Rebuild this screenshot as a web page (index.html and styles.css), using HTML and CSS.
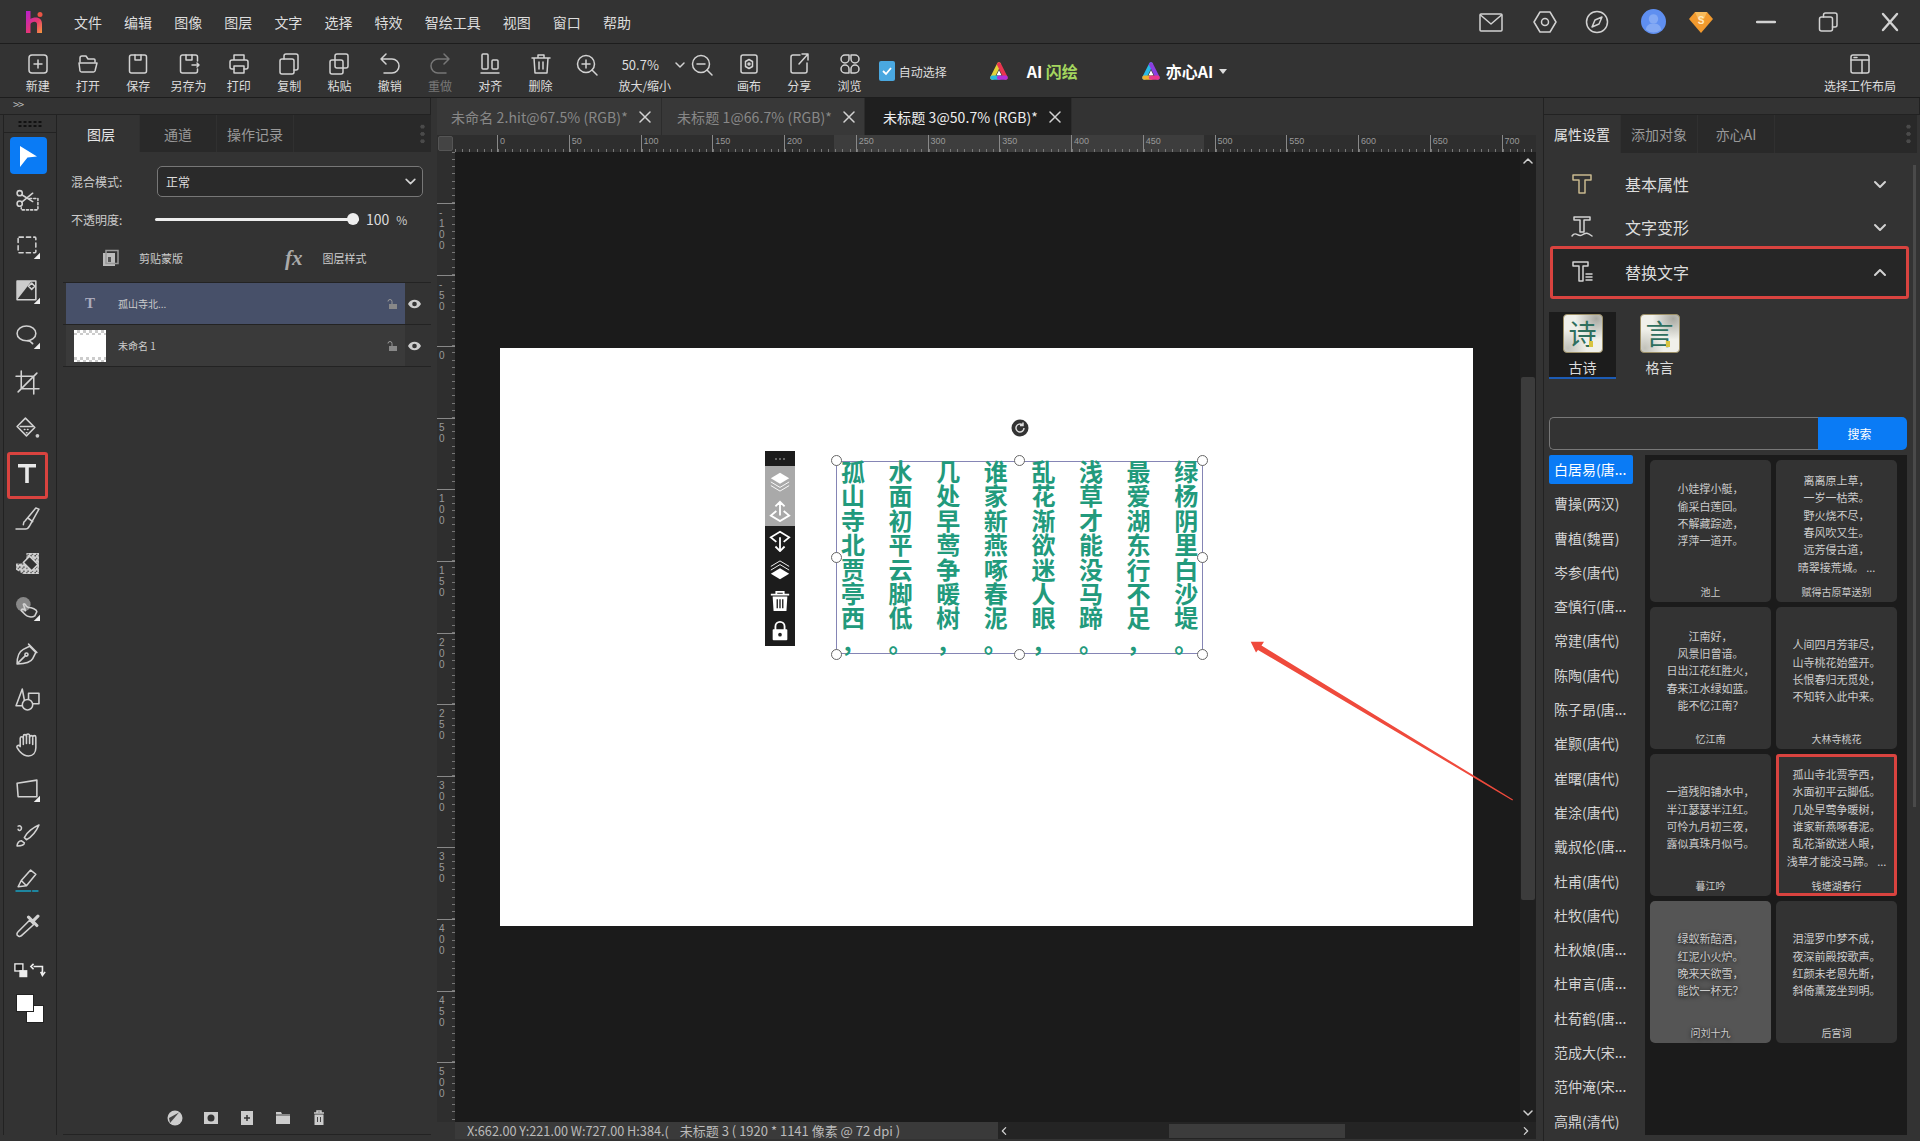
FILE: index.html
```html
<!DOCTYPE html>
<html lang="zh-CN">
<head>
    <meta charset="UTF-8">
    <title>Hitpaw</title>
    <link rel="stylesheet" href="styles.css">
</head>
<body>
    <header class="menubar">
        <svg class="logo" viewBox="0 0 24 24" width="24" height="24">
            <defs>
                <linearGradient id="logoGrad" x1="0" y1="0" x2="1" y2="1"><stop offset="0" stop-color="#b61fd0"/><stop offset="0.6" stop-color="#e8386f"/><stop offset="1" stop-color="#f59a3c"/></linearGradient>
            </defs>
            <path d="M3 1h4.500v8c1.500-1 3-1.500 5-1.500 4.500 0 6.500 2.500 6.500 6.500v9h-5v-8.500c0-1.800-.8-2.700-2.500-2.700-1.600 0-4 1-4 2.700v8.500H3z" fill="url(#logoGrad)"/>
            <circle cx="17" cy="4.500" r="2.500" fill="#ea5545"/>
        </svg>
        <nav class="menu">
            <span>文件</span><span>编辑</span><span>图像</span><span>图层</span><span>文字</span><span>选择</span><span>特效</span><span>智绘工具</span><span>视图</span><span>窗口</span><span>帮助</span>
        </nav>
        <div class="tray">
            <svg class="ico" viewBox="0 0 24 24" width="24" height="24"><rect x="1" y="4" width="22" height="17" rx="1"/><path d="M1.500 5l10.500 9 10.500-9"/></svg>
            <svg class="ico" viewBox="0 0 24 24" width="24" height="24"><path d="M7 2h10l6 10-6 10H7L1 12z"/><circle cx="12" cy="12" r="3.500"/></svg>
            <svg class="ico" viewBox="0 0 24 24" width="24" height="24"><circle cx="12" cy="12" r="10.500"/><path d="M17 7l-3 7-7 3 3-7z"/></svg>
            <svg viewBox="0 0 24 24" width="25" height="25"><circle cx="12" cy="12" r="12" fill="#5f8ff0"/><circle cx="12" cy="9.500" r="4.500" fill="#83a9f4"/><path d="M4.500 20c1-5 4-6 7.500-6s6.500 1 7.500 6a12 12 0 0 1-15 0z" fill="#83a9f4"/></svg>
            <svg viewBox="0 0 24 24" width="24" height="24"><path d="M6 2h12l6 7-12 14L0 9z" fill="#f29a2e"/><path d="M6 2h12l-3 7H9z" fill="#f7bb5c"/><text x="12" y="14" class="gem-text">S</text></svg>
        </div>
        <div class="winbtns">
            <svg class="ico wide" viewBox="0 0 20 20" width="20" height="20"><path d="M1 10h18"/></svg>
            <svg class="ico" viewBox="0 0 20 20" width="20" height="20"><rect x="1.500" y="5" width="13" height="14" rx="2"/><path d="M5.500 5V3a2 2 0 0 1 2-2H17a2 2 0 0 1 2 2v10a2 2 0 0 1-2 2h-2.500"/></svg>
            <svg class="ico wide" viewBox="0 0 20 20" width="20" height="20"><path d="M3 2l14 16M17 2L3 18"/></svg>
        </div>
    </header>

    <div class="toolbar">
        <div class="tbtn"><svg class="ico" viewBox="0 0 24 24"><rect x="3" y="3" width="18" height="18" rx="3"/><path d="M12 8v8M8 12h8"/></svg><span>新建</span></div>
        <div class="tbtn"><svg class="ico" viewBox="0 0 24 24"><path d="M4 10V6a2 2 0 0 1 2-2h4l2 3h6a1 1 0 0 1 1 1v2"/><path d="M3 11h18l-2 8a2 2 0 0 1-2 1H6a2 2 0 0 1-2-1z"/></svg><span>打开</span></div>
        <div class="tbtn"><svg class="ico" viewBox="0 0 24 24"><rect x="3.500" y="3" width="17" height="18" rx="2"/><path d="M9 3v5h6V3"/></svg><span>保存</span></div>
        <div class="tbtn"><svg class="ico" viewBox="0 0 24 24"><path d="M20.500 9V5a2 2 0 0 0-2-2h-13a2 2 0 0 0-2 2v14a2 2 0 0 0 2 2h13a2 2 0 0 0 2-2v-2"/><path d="M9 3v5h6V3M15 13h7M20 11l2 2-2 2"/></svg><span>另存为</span></div>
        <div class="tbtn"><svg class="ico" viewBox="0 0 24 24"><path d="M7 8V3h10v5M7 17H5a2 2 0 0 1-2-2v-5a2 2 0 0 1 2-2h14a2 2 0 0 1 2 2v5a2 2 0 0 1-2 2h-2"/><rect x="7" y="14" width="10" height="7"/></svg><span>打印</span></div>
        <div class="tbtn"><svg class="ico" viewBox="0 0 24 24"><rect x="3" y="7" width="14" height="15" rx="2"/><path d="M7 7V4a2 2 0 0 1 2-2h10a2 2 0 0 1 2 2v12a2 2 0 0 1-2 2h-2"/></svg><span>复制</span></div>
        <div class="tbtn"><svg class="ico" viewBox="0 0 24 24"><rect x="3" y="8" width="13" height="14" rx="2"/><rect x="8" y="2" width="13" height="14" rx="2"/></svg><span>粘贴</span></div>
        <div class="tbtn"><svg class="ico" viewBox="0 0 24 24"><path d="M8 2L3 7l5 5M3 7h11a6.500 6.500 0 0 1 0 14H6"/></svg><span>撤销</span></div>
        <div class="tbtn dim"><svg class="ico" viewBox="0 0 24 24"><path d="M16 2l5 5-5 5M21 7H10a6.500 6.500 0 0 0 0 14h8"/></svg><span>重做</span></div>
        <div class="tbtn"><svg class="ico" viewBox="0 0 24 24"><rect x="4" y="2" width="6" height="15" rx="1"/><rect x="14" y="8" width="6" height="9" rx="1"/><path d="M3 21h18"/></svg><span>对齐</span></div>
        <div class="tbtn"><svg class="ico" viewBox="0 0 24 24"><path d="M3 6h18M9 6V3h6v3M5 6l1 15h12l1-15M10 10v7M14 10v7"/></svg><span>删除</span></div>
        <div class="zoomgroup">
            <div class="zoomrow">
                <svg class="ico" viewBox="0 0 24 24" width="24" height="24"><circle cx="11" cy="11" r="8.500"/><path d="M11 7v8M7 11h8M17 17l5 5"/></svg>
                <span class="zoomval">50.7%</span>
                <svg class="ico chev" viewBox="0 0 12 12" width="12" height="12"><path d="M2 4l4 4 4-4"/></svg>
                <svg class="ico" viewBox="0 0 24 24" width="24" height="24"><circle cx="11" cy="11" r="8.500"/><path d="M7 11h8M17 17l5 5"/></svg>
            </div>
            <span class="zoomlabel">放大/缩小</span>
        </div>
        <div class="tbtn"><svg class="ico" viewBox="0 0 24 24"><rect x="4" y="3" width="16" height="18" rx="2"/><path d="M12 7.500l3.500 2v5l-3.500 2-3.500-2v-5z"/><circle cx="12" cy="12" r="1"/></svg><span>画布</span></div>
        <div class="tbtn"><svg class="ico" viewBox="0 0 24 24"><path d="M13 3H6a2 2 0 0 0-2 2v14a2 2 0 0 0 2 2h12a2 2 0 0 0 2-2v-8M21 2L12 12M15 2h6v6"/></svg><span>分享</span></div>
        <div class="tbtn"><svg class="ico" viewBox="0 0 24 24"><path d="M11 3v4a4 4 0 1 1-4-4zM13 7V3h4a4 4 0 1 1-4 4zM11 17v4H7a4 4 0 1 1 4-4zM13 17a4 4 0 1 1 4 4h-4z"/></svg><span>浏览</span></div>
        <label class="autosel"><span class="checkbox"><svg viewBox="0 0 16 16" width="16" height="16"><path d="M4 8l3 3 5-6" fill="none" stroke="#fff" stroke-width="1.800"/></svg></span>自动选择</label>
        <div class="aibtn flash">
            <svg viewBox="0 0 24 24" width="20" height="24"><g fill="none" stroke-width="5" stroke-linecap="round"><path d="M4 20L12 4" stroke="#e3d23a"/><path d="M12 4l8 16" stroke="#e8344f"/><path d="M4 20h8" stroke="#28b8e0"/><path d="M12 20h8" stroke="#b32fd8"/></g><path d="M12 11l3 6H9z" fill="#fff"/></svg>
            <span class="ai-name">AI <em>闪绘</em></span>
        </div>
        <div class="aibtn yixin">
            <svg viewBox="0 0 24 24" width="20" height="24"><g fill="none" stroke-width="5" stroke-linecap="round"><path d="M4 20L12 4" stroke="#27b9e6"/><path d="M12 4l8 16" stroke="#8a3fe0"/><path d="M4 20h8" stroke="#f0b030"/><path d="M12 20h8" stroke="#e8388c"/></g><path d="M12 11l3 6H9z" fill="#fff"/></svg>
            <span class="ai-name">亦心AI</span>
            <i class="caret"></i>
        </div>
        <div class="tbtn layoutbtn"><svg class="ico" viewBox="0 0 24 24"><rect x="3" y="3" width="18" height="18" rx="2"/><path d="M3 8h18M14 8v13M6 5.500h3"/></svg><span>选择工作布局</span></div>
    </div>

    <div class="main">
        <div class="leftdock">
            <div class="strip">&gt;&gt;</div>
            <div class="leftbody">
                <div class="tools">
                    <div class="grip"></div>
                    <div class="tool active"><svg viewBox="0 0 24 24" width="24" height="24"><path d="M5 2l17 10.500-9.500 1L5 23z" fill="#fff"/></svg></div>
                    <div class="tool"><svg class="ico" viewBox="0 0 24 24"><circle cx="4.500" cy="5" r="2.500"/><circle cx="4.500" cy="15" r="2.500"/><path d="M6.500 6.500L17 13M6.500 13.500L17 5"/><path d="M14 10h8v11H6v-2" stroke-dasharray="2 2"/></svg></div>
                    <div class="tool"><svg class="ico" viewBox="0 0 24 24"><rect x="3" y="3" width="17" height="15" rx="1" stroke-dasharray="4 3"/><path class="corner" d="M24 18v6h-6z"/></svg></div>
                    <div class="tool"><svg class="ico" viewBox="0 0 24 24"><rect x="2" y="2" width="18" height="18"/><path class="solid" d="M2 20V2h14z"/><path class="dark" d="M7 17l8-9"/><path d="M13 7l3-3 3 3-3 3z"/><path class="corner" d="M24 18v6h-6z"/></svg></div>
                    <div class="tool"><svg class="ico" viewBox="0 0 24 24"><ellipse cx="11" cy="9" rx="9" ry="7"/><path d="M12 16c3 0 4 2 5 3"/><path class="corner" d="M24 18v6h-6z"/></svg></div>
                    <div class="tool"><svg class="ico" viewBox="0 0 24 24"><path d="M6 1v17h17M1 6h17v17M3 21L21 3"/></svg></div>
                    <div class="tool"><svg class="ico" viewBox="0 0 24 24"><path d="M10 3l9 9-8 8-9-9z"/><path d="M5 11h12"/><circle class="solid" cx="21.500" cy="20" r="1.800"/><path d="M9 14h.5M12 14h.5M11 17h.5"/></svg></div>
                    <div class="tool flagged"><svg viewBox="0 0 24 24" width="24" height="24"><path d="M3 3h18v3.500h-7.200V22h-3.600V6.500H3z" fill="#e8e8e8"/></svg></div>
                    <div class="tool"><svg class="ico" viewBox="0 0 24 24"><path d="M1 22h9c2 0 3-1 4-3l9-16-3-1-10 12c-2 1-2 3-2 4M13 12l4 3"/></svg></div>
                    <div class="tool"><svg class="ico" viewBox="0 0 24 24"><defs><pattern id="chk" width="4" height="4" patternUnits="userSpaceOnUse"><rect width="2" height="2" fill="#aaa"/><rect x="2" y="2" width="2" height="2" fill="#aaa"/></pattern></defs><path d="M1 12h10V2h12v20H8l-7-4z" fill="url(#chk)" stroke="none"/><path d="M14 5l8 8-6 6-8-8z" class="erase"/></svg></div>
                    <div class="tool"><svg class="ico" viewBox="0 0 24 24"><circle class="gray" cx="8" cy="8" r="7"/><path d="M8 8c1-1 2 0 3 2l2 1c3 0 8 2 8 4l-2 4c-3 2-7 1-9-1l-4-4c0-1 1-2 3-1l1 1z"/><path class="corner" d="M24 18v6h-6z"/></svg></div>
                    <div class="tool"><svg class="ico" viewBox="0 0 24 24"><path d="M2 22c0-6 2-12 6-14l6-3 6 6-3 6c-2 4-9 5-15 5zM2 22l8-8M13 3l8 8"/><circle cx="11" cy="13" r="1.500"/></svg></div>
                    <div class="tool"><svg class="ico" viewBox="0 0 24 24"><path d="M7 2L1 18h9z"/><rect x="13" y="6" width="10" height="10"/><circle cx="12" cy="17" r="5" class="bgfill"/></svg></div>
                    <div class="tool"><svg class="ico" viewBox="0 0 24 24"><path d="M5 13V6a1.500 1.500 0 0 1 3 0V4a1.500 1.500 0 0 1 3 0v-.500a1.500 1.500 0 0 1 3 0V5a1.500 1.500 0 0 1 3 0 1.500 1.500 0 0 1 3 0v10c0 5-3 8-7 8-5 0-7-3-9-5l-2-3c-1-2 2-3 3-1z"/><path d="M8 6v6M11 4v7M14 4v7M17 6v6"/></svg></div>
                    <div class="tool"><svg class="ico" viewBox="0 0 24 24"><path d="M2 6l19-3v16H3z"/><path class="corner" d="M24 18v6h-6z"/></svg></div>
                    <div class="tool"><svg class="ico" viewBox="0 0 24 24"><path d="M23 2c-5 2-12 7-14 12l2 2c5-2 10-9 12-14zM3 3c2-1 4 1 3 3s-3 1-3 0M2 22c0-3 2-5 4-5l3 2c0 2-2 3-7 3z"/></svg></div>
                    <div class="tool"><svg class="ico" viewBox="0 0 24 24"><path d="M3 18l3-6 9-10 5 4-9 11zM6 12l5 5"/><path class="cyan" d="M1 22h14M17 22h5"/></svg></div>
                    <div class="tool"><svg class="ico" viewBox="0 0 24 24"><path d="M3 22c-2-1-1-3 0-4L14 7l4 4L7 21c-1 1-3 2-4 1z"/><path class="thick" d="M13 4l8 8M17 8l5-5"/></svg></div>
                    <div class="tool swap"><svg viewBox="0 0 36 18" width="32" height="16"><rect x="1" y="1" width="9" height="8" fill="#222" stroke="#eee" stroke-width="1.500"/><rect x="6" y="8" width="9" height="8" fill="#eee"/><path d="M22 4h10v8M30 10l2 4 3-4M22 1l-3 3 3 3" fill="none" stroke="#eee" stroke-width="1.800"/></svg></div>
                    <div class="colors"><i class="bgcolor"></i><i class="fgcolor"></i></div>
                </div>
                <section class="panel">
                    <div class="tabs">
                        <span class="tab on">图层</span><span class="tab">通道</span><span class="tab">操作记录</span>
                        <i class="dots"></i>
                    </div>
                    <div class="field blend">
                        <span class="field-label">混合模式:</span>
                        <div class="select">正常<svg class="ico" viewBox="0 0 12 12" width="13" height="13"><path d="M2 4l4 4 4-4"/></svg></div>
                    </div>
                    <div class="field opacity">
                        <span class="field-label">不透明度:</span>
                        <div class="slider"><i></i></div>
                        <span class="opacity-num">100</span><span class="opacity-unit">%</span>
                    </div>
                    <div class="layeracts">
                        <svg viewBox="0 0 18 18" width="18" height="18"><rect x="1" y="4" width="12" height="13" fill="#bbb"/><rect x="4" y="1.500" width="12" height="13" fill="none" stroke="#999" stroke-width="1.500"/><path d="M6 8h3v5H6z" fill="#555"/></svg>
                        <span class="act-one">剪贴蒙版</span>
                        <span class="fx">fx</span>
                        <span class="act-two">图层样式</span>
                    </div>
                    <div class="layer selected">
                        <div class="layer-main"><span class="layer-t">T</span><span>孤山寺北...</span>
                            <svg class="lock" viewBox="0 0 12 12" width="12" height="12"><path d="M2 3.500a2 2 0 0 1 4 0V6" fill="none" stroke="#999"/><rect x="3" y="6" width="8" height="5" fill="#888"/></svg>
                        </div>
                        <svg class="eye" viewBox="0 0 14 10" width="13" height="10"><path d="M0 5c3-6 11-6 14 0-3 6-11 6-14 0z" fill="#ccc"/><circle cx="7" cy="5" r="2.500" fill="#333"/></svg>
                    </div>
                    <div class="layer">
                        <div class="layer-main"><span class="thumb"></span><span>未命名 1</span>
                            <svg class="lock" viewBox="0 0 12 12" width="12" height="12"><path d="M2 3.500a2 2 0 0 1 4 0V6" fill="none" stroke="#999"/><rect x="3" y="6" width="8" height="5" fill="#888"/></svg>
                        </div>
                        <svg class="eye" viewBox="0 0 14 10" width="13" height="10"><path d="M0 5c3-6 11-6 14 0-3 6-11 6-14 0z" fill="#ccc"/><circle cx="7" cy="5" r="2.500" fill="#333"/></svg>
                    </div>
                    <div class="panelfoot">
                        <svg viewBox="0 0 16 16" width="16" height="16"><circle cx="8" cy="8" r="7.500" fill="#ccc"/><path d="M12 2.500L3 13 2 8z" fill="#444"/></svg>
                        <svg viewBox="0 0 16 16" width="16" height="16"><rect x="1" y="2" width="14" height="12" fill="#ccc"/><circle cx="8" cy="8" r="3.500" fill="#333"/></svg>
                        <svg viewBox="0 0 16 16" width="16" height="16"><rect x="2" y="1" width="12" height="14" fill="#ccc"/><path d="M8 5v6M5 8h6" stroke="#333" stroke-width="1.500"/></svg>
                        <svg viewBox="0 0 16 16" width="16" height="16"><path d="M1 2h5l1 2h8v10H1z" fill="#ccc"/><path d="M1 5h14" stroke="#444"/></svg>
                        <svg viewBox="0 0 16 16" width="16" height="16"><path d="M3 3h10M6 3V1h4v2" stroke="#ccc" fill="none" stroke-width="1.500"/><path d="M3.500 4.500h9V15h-9z" fill="#ccc"/><path d="M6.500 7v5M9.500 7v5" stroke="#444"/></svg>
                    </div>
                </section>
            </div>
        </div>

        <div class="center">
            <div class="doctabs">
                <div class="doctab first"><span>未命名 2.hit@67.5% (RGB)*</span><svg class="ico" viewBox="0 0 12 12" width="12" height="12"><path d="M1 1l10 10M11 1L1 11"/></svg></div>
                <div class="doctab second"><span>未标题 1@66.7% (RGB)*</span><svg class="ico" viewBox="0 0 12 12" width="12" height="12"><path d="M1 1l10 10M11 1L1 11"/></svg></div>
                <div class="doctab current"><span>未标题 3@50.7% (RGB)*</span><svg class="ico" viewBox="0 0 12 12" width="12" height="12"><path d="M1 1l10 10M11 1L1 11"/></svg></div>
            </div>
            <div class="hruler">
                <i class="ruler-corner"></i>
                <i class="hruler-sel"></i>
                <div class="hmarks">
                    <span>0</span><span>50</span><span>100</span><span>150</span><span>200</span><span>250</span><span>300</span><span>350</span><span>400</span><span>450</span><span>500</span><span>550</span><span>600</span><span>650</span><span>700</span>
                </div>
            </div>
            <div class="workspace">
                <div class="vruler">
                    <span>-100</span><span>-50</span><span>0</span><span>50</span><span>100</span><span>150</span><span>200</span><span>250</span><span>300</span><span>350</span><span>400</span><span>450</span><span>500</span>
                </div>
                <div class="viewport">
                    <div class="artboard">
                        <div class="floatbar">
                            <div class="fb-grip"></div>
                            <div class="fb-btn off"><svg viewBox="0 0 24 24"><path d="M12 3l10 6-10 6-10-6z" fill="#fff"/><path d="M2 13l10 6 10-6M2 17l10 6 10-6" fill="none" stroke="#fff" stroke-width="1"/></svg></div>
                            <div class="fb-btn off"><svg viewBox="0 0 24 24"><path d="M12 2v15M7 7l5-5 5 5M8 12l-6 5 10 6 10-6-6-5" fill="none" stroke="#fff" stroke-width="2"/></svg></div>
                            <div class="fb-btn"><svg viewBox="0 0 24 24"><path d="M12 8v15M7 18l5 5 5-5M8 13L2 8l10-6 10 6-6 5" fill="none" stroke="#fff" stroke-width="2"/></svg></div>
                            <div class="fb-btn"><svg viewBox="0 0 24 24"><path d="M2 7l10-6 10 6M2 11l10-6 10 6" fill="none" stroke="#fff" stroke-width="1"/><path d="M12 9l10 6-10 6-10-6z" fill="#fff"/></svg></div>
                            <div class="fb-btn"><svg viewBox="0 0 24 24"><path d="M2 5h20M8 5V2h8v3" fill="none" stroke="#fff" stroke-width="2"/><path d="M4 7h16l-1 16H5z" fill="#fff"/><path d="M9 10v10M12 10v10M15 10v10" stroke="#222" stroke-width="1.500"/></svg></div>
                            <div class="fb-btn"><svg viewBox="0 0 24 24"><path d="M7 11V7a5 5 0 0 1 10 0v4" fill="none" stroke="#fff" stroke-width="2"/><rect x="4" y="10" width="16" height="12" rx="1" fill="#fff"/><circle cx="12" cy="16" r="2" fill="#222"/></svg></div>
                        </div>
                        <svg class="rotator" viewBox="0 0 18 18" width="18" height="18"><circle cx="9" cy="9" r="8.500" fill="#333"/><path d="M13 9a4 4 0 1 1-1.500-3.100M12 3.500v3h-3" fill="none" stroke="#ddd" stroke-width="1.500"/></svg>
                        <div class="textframe">
                            <div class="verse">
                                <div>孤山寺北贾亭西，</div><div>水面初平云脚低。</div><div>几处早莺争暖树，</div><div>谁家新燕啄春泥。</div><div>乱花渐欲迷人眼，</div><div>浅草才能没马蹄。</div><div>最爱湖东行不足，</div><div>绿杨阴里白沙堤。</div>
                            </div>
                            <i class="handle tl"></i><i class="handle tc"></i><i class="handle tr"></i>
                            <i class="handle ml"></i><i class="handle mr"></i>
                            <i class="handle bl"></i><i class="handle bc"></i><i class="handle br"></i>
                        </div>
                    </div>
                </div>
                <div class="vscroll">
                    <svg class="ico" viewBox="0 0 12 12" width="12" height="12"><path d="M2 8l4-4 4 4"/></svg>
                    <i class="vthumb"></i>
                    <svg class="ico endarrow" viewBox="0 0 12 12" width="12" height="12"><path d="M2 4l4 4 4-4"/></svg>
                </div>
            </div>
            <div class="statusrow">
                <i class="status-corner"></i>
                <div class="status"><span class="status-pos">X:662.00 Y:221.00 W:727.00 H:384.(</span><span>未标题 3 ( 1920 * 1141 像素 @ 72 dpi )</span></div>
                <div class="hscroll">
                    <svg class="ico" viewBox="0 0 12 12" width="10" height="10"><path d="M8 2L4 6l4 4"/></svg>
                    <i class="hthumb"></i>
                    <svg class="ico endarrow" viewBox="0 0 12 12" width="10" height="10"><path d="M4 2l4 4-4 4"/></svg>
                </div>
            </div>
        </div>

        <aside class="rightdock">
            <div class="strip"></div>
            <div class="tabs right">
                <span class="tab on">属性设置</span><span class="tab">添加对象</span><span class="tab">亦心AI</span>
                <i class="dots"></i>
            </div>
            <div class="sections">
                <div class="section">
                    <svg class="ico sec-ico" viewBox="0 0 24 24" width="24" height="24"><path d="M3 3h18v5h-6v13H9V8H3z" stroke="#c9b98f"/></svg>
                    <span>基本属性</span>
                    <svg class="ico sec-chev" viewBox="0 0 14 14" width="14" height="14"><path d="M2 5l5 5 5-5"/></svg>
                </div>
                <div class="section">
                    <svg class="ico sec-ico" viewBox="0 0 24 24" width="24" height="24"><path d="M4 2h16v3h-6v12h-4V5H4zM2 21c4-6 6 2 10-1s6-2 10 1"/></svg>
                    <span>文字变形</span>
                    <svg class="ico sec-chev" viewBox="0 0 14 14" width="14" height="14"><path d="M2 5l5 5 5-5"/></svg>
                </div>
                <div class="section open">
                    <svg class="ico sec-ico" viewBox="0 0 24 24" width="24" height="24"><path d="M3 2h15v4h-5v15h-4V6H3zM16 14h6M16 17h6M16 20h6"/></svg>
                    <span>替换文字</span>
                    <svg class="ico sec-chev" viewBox="0 0 14 14" width="14" height="14"><path d="M2 10l5-5 5 5"/></svg>
                </div>
            </div>
            <div class="kinds">
                <div class="kind on"><span class="kind-tile">诗</span><span>古诗</span></div>
                <div class="kind"><span class="kind-tile">言</span><span>格言</span></div>
            </div>
            <div class="search"><input class="search-input" type="text"><button class="search-btn">搜索</button></div>
            <div class="library">
                <ul class="authors">
                    <li class="on">白居易(唐...</li><li>曹操(两汉)</li><li>曹植(魏晋)</li><li>岑参(唐代)</li><li>查慎行(唐...</li><li>常建(唐代)</li><li>陈陶(唐代)</li><li>陈子昂(唐...</li><li>崔颢(唐代)</li><li>崔曙(唐代)</li><li>崔涂(唐代)</li><li>戴叔伦(唐...</li><li>杜甫(唐代)</li><li>杜牧(唐代)</li><li>杜秋娘(唐...</li><li>杜审言(唐...</li><li>杜荀鹤(唐...</li><li>范成大(宋...</li><li>范仲淹(宋...</li><li>高鼎(清代)</li>
                </ul>
                <div class="poems">
                    <div class="poem raised"><p>小娃撑小艇，<br>偷采白莲回。<br>不解藏踪迹，<br>浮萍一道开。</p><h4>池上</h4></div>
                    <div class="poem"><p>离离原上草，<br>一岁一枯荣。<br>野火烧不尽，<br>春风吹又生。<br>远芳侵古道，<br>晴翠接荒城。 ...</p><h4>赋得古原草送别</h4></div>
                    <div class="poem"><p>江南好，<br>风景旧曾谙。<br>日出江花红胜火，<br>春来江水绿如蓝。<br>能不忆江南？</p><h4>忆江南</h4></div>
                    <div class="poem"><p>人间四月芳菲尽，<br>山寺桃花始盛开。<br>长恨春归无觅处，<br>不知转入此中来。</p><h4>大林寺桃花</h4></div>
                    <div class="poem"><p>一道残阳铺水中，<br>半江瑟瑟半江红。<br>可怜九月初三夜，<br>露似真珠月似弓。</p><h4>暮江吟</h4></div>
                    <div class="poem picked"><p>孤山寺北贾亭西，<br>水面初平云脚低。<br>几处早莺争暖树，<br>谁家新燕啄春泥。<br>乱花渐欲迷人眼，<br>浅草才能没马蹄。 ...</p><h4>钱塘湖春行</h4></div>
                    <div class="poem hover"><p>绿蚁新醅酒，<br>红泥小火炉。<br>晚来天欲雪，<br>能饮一杯无？</p><h4>问刘十九</h4></div>
                    <div class="poem"><p>泪湿罗巾梦不成，<br>夜深前殿按歌声。<br>红颜未老恩先断，<br>斜倚薰笼坐到明。</p><h4>后宫词</h4></div>
                </div>
            </div>
            <i class="sidescroll"></i>
        </aside>
    </div>

    <svg class="callout" viewBox="0 0 1920 1141" width="1920" height="1141"><polygon points="1250.700,641.700 1264,641.700 1261.500,645.500 1513,799.500 1512.400,800.500 1258,650 1256,652.500" fill="#ef4a3c"/></svg>
</body>
</html>
```

FILE: styles.css
```css
*, *::before, *::after {
    box-sizing: border-box;
}
body {
    margin: 0;
    width: 1920px;
    height: 1141px;
    overflow: hidden;
    position: relative;
    background: #333;
    color: #ddd;
    font-family: "Noto Sans CJK SC", "Liberation Sans", sans-serif;
    font-size: 12px;
    display: flex;
    flex-direction: column;
}
i, em {
    font-style: normal;
}
.ico {
    fill: none;
    stroke: #d2d2d2;
    stroke-width: 1.5;
    stroke-linecap: round;
    stroke-linejoin: round;
    flex: none;
}
.ico .corner { fill: #eee; stroke: none; }
.ico .solid { fill: #ccc; stroke: none; }
.ico .dark { stroke: #333; }
.ico .gray { fill: #888; stroke: none; }
.ico .cyan { stroke: #19a3c4; }
.ico .thick { stroke-width: 3; }
.ico .bgfill { fill: #333; }
.ico .erase { fill: #333; }

/* top menu */
.menubar {
    height: 44px;
    flex: none;
    display: flex;
    align-items: center;
    border-bottom: 1px solid #1d1d1d;
    padding-left: 23px;
}
.menu {
    display: flex;
    gap: 22.100px;
    margin-left: 27px;
    font-size: 14px;
    line-height: 20px;
}
.tray {
    margin-left: auto;
    display: flex;
    align-items: center;
}
.tray svg:nth-child(2) { margin-left: 30px; }
.tray svg:nth-child(3) { margin-left: 28px; }
.tray svg:nth-child(4) { margin-left: 32px; }
.tray svg:nth-child(5) { margin-left: 23px; }
.gem-text {
    font-family: "Liberation Sans", sans-serif;
    font-size: 10px;
    font-weight: bold;
    fill: #ffe9c0;
    text-anchor: middle;
}
.winbtns {
    display: flex;
    gap: 42px;
    margin-left: 43px;
    padding-right: 20px;
}
.winbtns .wide { stroke-width: 2.4; }

/* toolbar */
.toolbar {
    height: 54px;
    flex: none;
    display: flex;
    padding-left: 12.500px;
    border-bottom: 1px solid #1d1d1d;
}
.tbtn {
    width: 50.300px;
    flex: none;
    display: flex;
    flex-direction: column;
    align-items: center;
    padding-top: 8px;
    color: #ddd;
    line-height: 17px;
}
.tbtn svg {
    width: 24px;
    height: 24px;
    margin-bottom: 1px;
}
.tbtn.dim {
    color: #777;
}
.tbtn.dim .ico {
    stroke: #777;
}
.zoomgroup {
    width: 158px;
    flex: none;
    display: flex;
    flex-direction: column;
    align-items: center;
    padding-top: 8px;
    line-height: 17px;
}
.zoomrow {
    display: flex;
    align-items: center;
    height: 25px;
}
.zoomval {
    width: 58px;
    margin-left: 12px;
    text-align: center;
    font-size: 13px;
}
.zoomrow .chev {
    margin: 0 4px 0 5px;
}
.autosel {
    display: flex;
    align-items: center;
    margin-left: 4px;
    gap: 4px;
    height: 54px;
    flex: none;
}
.checkbox {
    width: 16px;
    height: 20px;
    background: #4aa8e0;
    border-radius: 2px;
    display: flex;
    align-items: center;
}
.aibtn {
    display: flex;
    align-items: center;
    height: 54px;
    color: #fff;
    font-weight: bold;
    flex: none;
}
.flash {
    margin-left: 42px;
    gap: 18px;
}
.flash em {
    color: #a4d65e;
}
.ai-name {
    font-size: 16px;
    white-space: nowrap;
}
.yixin {
    margin-left: 63px;
    gap: 5px;
}
.caret {
    width: 0;
    height: 0;
    border: 4px solid transparent;
    border-top: 5px solid #ddd;
    border-bottom: 0;
    margin-left: 1px;
}
.layoutbtn {
    margin-left: auto;
    margin-right: 24px;
    width: 72px;
    white-space: nowrap;
}

/* layout */
.main {
    flex: 1;
    display: flex;
    min-height: 0;
}
.leftdock {
    width: 437px;
    flex: none;
    display: flex;
    flex-direction: column;
}
.strip {
    height: 17px;
    flex: none;
    border-bottom: 1px solid #222;
    border-right: 1px solid #222;
    margin-right: 6px;
    padding-left: 13px;
    font-size: 11px;
    letter-spacing: -1px;
    line-height: 13px;
    color: #bbb;
}
.leftbody {
    flex: 1;
    display: flex;
    min-height: 0;
    padding: 0 6px 6px 3px;
    gap: 6px;
}

/* tools */
.tools {
    width: 54px;
    flex: none;
    border-left: 1px solid #222;
    border-right: 1px solid #222;
}
.grip {
    height: 18px;
    border-bottom: 1px solid #222;
    background: radial-gradient(circle, #111 1.200px, transparent 1.300px) center 5px / 5px 4px repeat-x, radial-gradient(circle, #111 1.200px, transparent 1.300px) center 9px / 5px 4px repeat-x;
    background-clip: content-box;
    padding: 0 13px;
}
.tool {
    height: 45.300px;
    display: flex;
    align-items: center;
    justify-content: center;
    position: relative;
    padding-right: 6px;
}
.tool svg.ico {
    width: 25px;
    height: 25px;
}
.tool.active::before {
    content: "";
    position: absolute;
    left: 6px;
    top: 4px;
    width: 37px;
    height: 37px;
    background: #0a7bf5;
    border-radius: 4px;
}
.tool.active svg {
    position: relative;
}
.tool.flagged::after {
    content: "";
    position: absolute;
    left: 3px;
    top: 2px;
    width: 41px;
    height: 47px;
    border: 3px solid #d9433f;
    border-radius: 3px;
}
.tool.swap {
    padding-right: 0;
}
.colors {
    position: relative;
    height: 30px;
}
.colors i {
    position: absolute;
    display: block;
    width: 18px;
    height: 18px;
    background: #fff;
}
.colors .bgcolor {
    left: 22px;
    top: 11px;
    border: 1px solid #222;
}
.colors .fgcolor {
    left: 12px;
    top: 0;
    border: 1px solid #222;
}

/* panel shared */
.panel {
    flex: 1;
    display: flex;
    flex-direction: column;
    min-width: 0;
}
.tabs {
    height: 37px;
    flex: none;
    display: flex;
    background: #292929;
    position: relative;
    font-size: 14px;
    color: #999;
}
.tab {
    width: 77px;
    display: flex;
    align-items: center;
    justify-content: center;
    border-right: 1px solid #303030;
    white-space: nowrap;
}
.tab.on {
    background: #333;
    color: #e6e6e6;
}
.dots {
    position: absolute;
    right: 4px;
    top: 8px;
    width: 9px;
    height: 22px;
    background: radial-gradient(circle, #4a4a4a 2px, transparent 2.200px) 0 0 / 9px 7.300px;
}

/* layer panel */
.field {
    display: flex;
    align-items: center;
    padding-left: 8px;
}
.field-label {
    width: 86px;
    color: #ccc;
}
.blend {
    margin-top: 14px;
    height: 31px;
}
.select {
    width: 266px;
    height: 31px;
    background: #2a2a2a;
    border: 1px solid #777;
    border-radius: 5px;
    display: flex;
    align-items: center;
    justify-content: space-between;
    padding: 0 5px 0 8px;
    font-size: 12px;
}
.opacity {
    margin-top: 7px;
    height: 30px;
}
.slider {
    width: 204px;
    height: 3px;
    margin-left: -2px;
    background: #eee;
    border-radius: 2px;
    position: relative;
}
.slider i {
    position: absolute;
    right: 0;
    top: -5px;
    width: 12px;
    height: 12px;
    border-radius: 50%;
    background: #eee;
}
.opacity-num {
    font-size: 14px;
    margin-left: 7px;
    color: #ddd;
}
.opacity-unit {
    margin-left: 7px;
    color: #ccc;
}
.layeracts {
    height: 49px;
    display: flex;
    align-items: center;
    font-size: 11px;
    color: #ccc;
    padding-left: 39px;
    padding-bottom: 1px;
    border-bottom: 1px solid #232323;
}
.act-one {
    margin-left: 19px;
}
.fx {
    margin-left: 102px;
    font-family: "Liberation Serif", serif;
    font-style: italic;
    font-weight: bold;
    font-size: 21px;
    color: #aaa;
    line-height: 24px;
}
.act-two {
    margin-left: 20px;
}
.layer {
    height: 42px;
    display: flex;
    align-items: center;
    border-bottom: 1px solid #232323;
    font-size: 10px;
    color: #ccc;
}
.layer-main {
    width: 339px;
    margin-left: 3px;
    height: 100%;
    display: flex;
    align-items: center;
    background: #3a3a3a;
    padding-left: 8px;
    position: relative;
}
.layer.selected .layer-main {
    background: #475069;
}
.layer-t {
    width: 32px;
    margin-right: 12px;
    text-align: center;
    font-family: "Liberation Serif", serif;
    font-weight: bold;
    font-size: 15px;
    color: #aab;
}
.thumb {
    width: 32px;
    height: 32px;
    margin-right: 12px;
    background: linear-gradient(#fff, #fff) center / 32px 22px no-repeat, repeating-conic-gradient(#ccc 0 25%, #fff 0 50%) 0 0 / 6px 6px;
}
.lock {
    margin-left: auto;
    margin-right: 7px;
}
.eye {
    margin-left: 3px;
}
.panelfoot {
    margin-top: auto;
    display: flex;
    gap: 20px;
    padding: 0 0 8px 104px;
    height: 26px;
    align-items: center;
    border-bottom: 1px solid #232323;
}

/* center */
.center {
    width: 1099px;
    flex: none;
    display: flex;
    flex-direction: column;
    margin-right: 7px;
}
.doctabs {
    height: 37px;
    flex: none;
    display: flex;
    background: #333;
    font-size: 14px;
    letter-spacing: .1px;
    color: #888;
}
.doctab {
    display: flex;
    align-items: center;
    gap: 11px;
    white-space: nowrap;
    background: #383838;
    border-right: 1px solid #2c2c2c;
}
.doctab.first { width: 225px; padding-left: 14px; }
.doctab.second { width: 203px; padding-left: 15px; gap: 11px; }
.doctab.current {
    width: 207px;
    padding-left: 18px;
    background: #1f1f1f;
    color: #eee;
}
.hruler {
    height: 17px;
    flex: none;
    position: relative;
    display: flex;
    background: #2e2e2e;
}
.hruler::after {
    content: "";
    position: absolute;
    left: 18px;
    right: 0;
    bottom: 0;
    height: 3px;
    background: repeating-linear-gradient(90deg, #777 0 1px, transparent 1px 7.175px);
}
.ruler-corner {
    width: 15px;
    height: 15px;
    margin: 1px 0 0 1px;
    background: #444;
    border: 1px solid #555;
    border-radius: 2px;
}
.hmarks {
    position: absolute;
    left: 60px;
    top: 0;
    display: flex;
    z-index: 1;
}
.hmarks span {
    width: 71.750px;
    height: 17px;
    border-left: 1px solid #888;
    padding-left: 2px;
    font-size: 9px;
    line-height: 13px;
    color: #999;
    font-family: "Liberation Sans", sans-serif;
}
.hruler-sel {
    position: absolute;
    left: 397px;
    width: 370px;
    top: 0;
    bottom: 0;
    background: #3d3d3d;
}
.workspace {
    flex: 1;
    display: flex;
    min-height: 0;
}
.vruler {
    width: 18px;
    flex: none;
    background: #2e2e2e;
    background-image: repeating-linear-gradient(180deg, #777 0 1px, transparent 1px 7.160px);
    background-size: 3px 100%;
    background-position: right 0;
    background-repeat: no-repeat;
    padding-top: 51px;
    overflow: hidden;
}
.vruler span {
    display: block;
    height: 71.600px;
    width: 100%;
    border-top: 1px solid #888;
    padding: 3px 9px 0 2px;
    font-size: 10px;
    line-height: 11px;
    color: #999;
    word-break: break-all;
    font-family: "Liberation Sans", sans-serif;
}
.viewport {
    flex: 1;
    background: #1b1b1b;
    padding: 196px 0 0 45px;
    min-width: 0;
}
.artboard {
    width: 973px;
    height: 578px;
    background: #fff;
    position: relative;
}
.floatbar {
    position: absolute;
    left: 265px;
    top: 103px;
    width: 30px;
    height: 195px;
    background: #1c1c1c;
}
.fb-grip {
    height: 15px;
    padding: 0 9px;
    background: radial-gradient(circle, #666 1px, transparent 1.200px) center center / 4px 4px repeat-x;
    background-clip: content-box;
}
.fb-btn {
    height: 30px;
    display: flex;
    align-items: center;
    justify-content: center;
}
.fb-btn.off {
    background: #a9a9a9;
}
.fb-btn svg {
    width: 22px;
    height: 22px;
}
.rotator {
    position: absolute;
    left: 511px;
    top: 71px;
}
.textframe {
    position: absolute;
    left: 336px;
    top: 113px;
    width: 367px;
    height: 193px;
    border: 1px solid #8585b5;
}
.verse {
    display: flex;
    gap: 23.600px;
    margin-top: -3px;
    padding-left: 4px;
    font-size: 24px;
    line-height: 24.400px;
    font-weight: bold;
    color: #229a7c;
}
.verse div {
    width: 24px;
    word-break: break-all;
    line-break: anywhere;
}
.handle {
    position: absolute;
    width: 11px;
    height: 11px;
    border-radius: 50%;
    background: #fff;
    border: 1px solid #666;
}
.handle.tl, .handle.tc, .handle.tr { top: -7px; }
.handle.ml, .handle.mr { top: 90px; }
.handle.bl, .handle.bc, .handle.br { bottom: -7px; }
.handle.tl, .handle.ml, .handle.bl { left: -6px; }
.handle.tc, .handle.bc { left: 177px; }
.handle.tr, .handle.mr, .handle.br { right: -6px; }
.vscroll {
    width: 16px;
    flex: none;
    background: #1f1f1f;
    display: flex;
    flex-direction: column;
    align-items: center;
    padding: 3px 0;
}
.vthumb {
    width: 14px;
    height: 523px;
    margin-top: 210px;
    background: #3c3c3c;
    border-radius: 2px;
}
.vscroll .endarrow {
    margin-top: auto;
}
.statusrow {
    height: 17px;
    flex: none;
    margin-bottom: 2px;
    display: flex;
}
.status-corner {
    width: 18px;
    flex: none;
}
.status {
    width: 543px;
    flex: none;
    background: #3a3a3a;
    padding-left: 12px;
    display: flex;
    gap: 11px;
    font-size: 13px;
    line-height: 17px;
    color: #bbb;
    white-space: nowrap;
    overflow: hidden;
}
.status-pos {
    font-size: 12.700px;
}
.hscroll {
    flex: 1;
    display: flex;
    align-items: center;
    background: #242424;
    padding: 0 5px 0 1px;
}
.hthumb {
    width: 176px;
    height: 14px;
    margin-left: 160px;
    background: #3c3c3c;
}
.hscroll .endarrow {
    margin-left: auto;
}

/* right */
.rightdock {
    flex: 1;
    position: relative;
    display: flex;
    flex-direction: column;
    min-width: 0;
    border-left: 1px solid #222;
}
.rightdock .strip {
    margin-right: 0;
}
.tabs.right {
    margin-right: 3px;
    height: 38px;
}
.sections {
    padding-top: 10px;
}
.section {
    height: 43px;
    margin: 0 11px 0 6px;
    display: flex;
    align-items: center;
    border: 3px solid transparent;
    padding: 0 19px 2px 17px;
    font-size: 16px;
    color: #ddd;
}
.section.open {
    height: 53px;
    margin-top: -3px;
    border-color: #d9433f;
    border-radius: 3px;
    background: #262626;
}
.sec-ico {
    margin-right: 31px;
}
.sec-chev {
    margin-left: auto;
    stroke-width: 2;
}
.kinds {
    display: flex;
    gap: 10px;
    margin: 13px 0 0 5px;
}
.kind {
    width: 67px;
    height: 67px;
    display: flex;
    flex-direction: column;
    align-items: center;
    font-size: 14px;
    line-height: 20px;
    padding-top: 2px;
    gap: 4px;
}
.kind.on {
    background: #1c1c1c;
    border-bottom: 2px solid #1c5bb4;
}
.kind-tile {
    width: 40px;
    height: 39px;
    flex: none;
    position: relative;
    background: radial-gradient(circle at 85% 10%, #a9a9a2, transparent 45%), radial-gradient(circle at 10% 90%, #c2c2ba, transparent 40%), #f0f0ea;
    border: 1px solid #9c8f66;
    border-radius: 4px;
    color: #2f6f5e;
    font-size: 28px;
    line-height: 36px;
    text-align: center;
}
.kind-tile::after {
    content: "";
    position: absolute;
    right: 9px;
    bottom: 5px;
    width: 4px;
    height: 6px;
    background: #d8c440;
}
.search {
    display: flex;
    margin: 38px 0 0 5px;
    width: 358px;
    height: 33px;
}
.search-input {
    flex: 1;
    min-width: 0;
    background: #333;
    border: 1px solid #777;
    border-right: 0;
    border-radius: 5px 0 0 5px;
}
.search-btn {
    width: 89px;
    border: 0;
    padding: 0 6px 0 0;
    background: #0a7bf5;
    color: #fff;
    font: inherit;
    font-size: 12px;
    border-radius: 0 5px 5px 0;
}
.library {
    flex: 1;
    display: flex;
    margin: 5px 13px 6px 5px;
    min-height: 0;
}
.authors {
    list-style: none;
    margin: 0;
    padding: 0;
    width: 96px;
    flex: none;
    display: flex;
    flex-direction: column;
    gap: 5.300px;
    overflow: hidden;
    font-size: 14px;
    color: #d4d4d4;
}
.authors li {
    width: 84px;
    height: 29px;
    flex: none;
    line-height: 29px;
    padding-left: 5px;
    white-space: nowrap;
}
.authors li.on {
    background: #0a7bf5;
    color: #fff;
    border-radius: 2px;
}
.poems {
    flex: 1;
    background: #1b1b1b;
    display: grid;
    grid-template-columns: 121px 121px;
    grid-auto-rows: 142px;
    gap: 5px;
    padding: 5px;
    align-content: start;
}
.poem {
    background: #333;
    border-radius: 5px;
    display: grid;
    grid-template-rows: 1fr auto;
    justify-items: center;
    align-items: center;
    color: #ccc;
    padding-bottom: 2px;
    min-width: 0;
}
.poem p {
    margin: 4px 0 0;
    font-size: 11px;
    line-height: 17.300px;
    white-space: nowrap;
    text-align: center;
}
.poem.raised p {
    margin: 0 0 14px;
}
.poem h4 {
    margin: 0;
    font-weight: normal;
    font-size: 10px;
    line-height: 16px;
    color: #ccc;
}
.poem.picked {
    outline: 3px solid #d9433f;
    outline-offset: -3px;
    border-radius: 3px;
}
.poem.hover {
    background: #555;
    text-shadow: 0 1px 4px #000;
}
.sidescroll {
    position: absolute;
    right: 4px;
    top: 67px;
    width: 3px;
    height: 642px;
    background: #4a4a4a;
}

/* red arrow over the picture */
.callout {
    position: absolute;
    left: 0;
    top: 0;
    pointer-events: none;
}
```
